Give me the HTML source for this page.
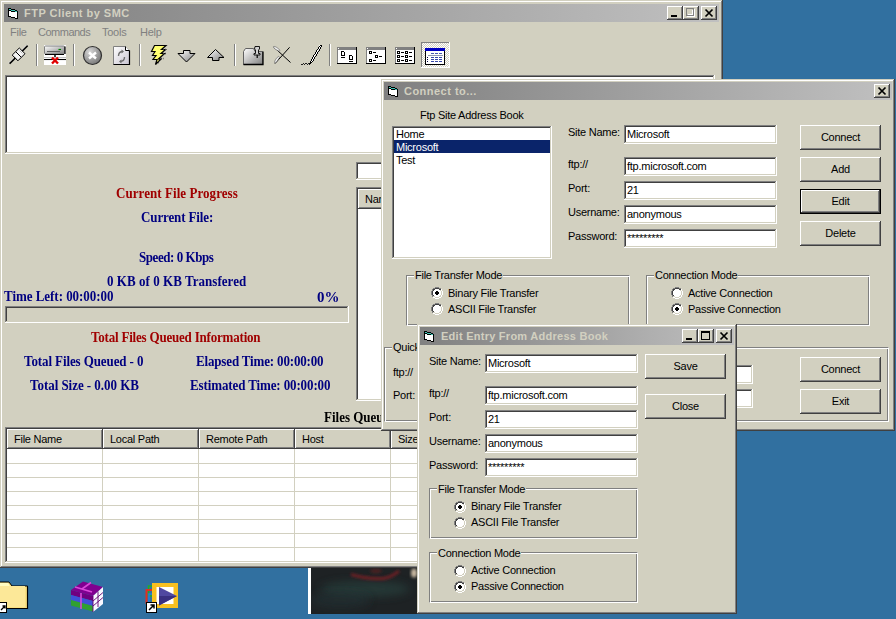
<!DOCTYPE html>
<html><head><meta charset="utf-8"><style>
*{margin:0;padding:0;box-sizing:border-box}
html,body{width:896px;height:619px;overflow:hidden;background:#3170A0;font-family:"Liberation Sans",sans-serif;font-size:11px;color:#000}
.a{position:absolute}
svg{shape-rendering:crispEdges}
.win{position:absolute;background:#D2D0C0;box-shadow:inset -1px -1px #404040,inset 1px 1px #D2D0C0,inset -2px -2px #808080,inset 2px 2px #FFFFFF}
.title{position:absolute;height:18px;background:linear-gradient(to right,#808080,#C0C0C0);color:#D2D0C0;font-weight:bold;font-size:11px;line-height:18px;white-space:nowrap}
.title span{position:absolute;top:0;left:20px}
.tb{position:absolute;width:16px;height:14px;background:#D2D0C0;box-shadow:inset -1px -1px #404040,inset 1px 1px #fff,inset -2px -2px #808080,inset 2px 2px #D2D0C0}
.tb svg{position:absolute;left:0;top:0}
.sunk{position:absolute;background:#fff;box-shadow:inset -1px -1px #fff,inset 1px 1px #808080,inset -2px -2px #D2D0C0,inset 2px 2px #404040}
.btn{position:absolute;width:81px;height:25px;background:#D2D0C0;box-shadow:inset -1px -1px #404040,inset 1px 1px #fff,inset -2px -2px #808080,inset 2px 2px #D2D0C0;text-align:center;line-height:24px;white-space:nowrap;letter-spacing:-0.25px}
.btn.def{box-shadow:inset -1px -1px #000,inset 1px 1px #000,inset -2px -2px #404040,inset 2px 2px #fff,inset -3px -3px #808080}
.t{position:absolute;white-space:nowrap;line-height:13px;letter-spacing:-0.25px}
.grp{position:absolute;border:1px solid #808080;border-right-color:#fff;border-bottom-color:#fff;box-shadow:inset 1px 1px #fff,inset -1px -1px #808080}
.lbl{position:absolute;background:#D2D0C0;padding:0 1px;line-height:13px;white-space:nowrap;letter-spacing:-0.25px}
.rad{position:absolute;width:12px;height:12px}
.srf{font-family:"Liberation Serif",serif;font-weight:bold;font-size:13px;line-height:15px;position:absolute;white-space:nowrap;color:#000080;transform:scaleY(1.07);transform-origin:0 11.5px}
.hd{position:absolute;top:0;height:20px;background:#D2D0C0;box-shadow:inset -1px -1px #404040,inset 1px 1px #fff,inset -2px -2px #808080;line-height:21px;padding-left:7px;white-space:nowrap;letter-spacing:-0.25px}
.tbx span{position:absolute;left:3px;top:3px;line-height:13px;white-space:nowrap;letter-spacing:-0.25px}
</style></head><body>
<svg width="0" height="0" style="position:absolute"><defs><g id="rb"><rect x="4" y="0" width="1" height="1" fill="#808080"/><rect x="5" y="0" width="1" height="1" fill="#808080"/><rect x="6" y="0" width="1" height="1" fill="#808080"/><rect x="7" y="0" width="1" height="1" fill="#808080"/><rect x="2" y="1" width="1" height="1" fill="#808080"/><rect x="3" y="1" width="1" height="1" fill="#808080"/><rect x="4" y="1" width="1" height="1" fill="#404040"/><rect x="5" y="1" width="1" height="1" fill="#404040"/><rect x="6" y="1" width="1" height="1" fill="#404040"/><rect x="7" y="1" width="1" height="1" fill="#404040"/><rect x="8" y="1" width="1" height="1" fill="#808080"/><rect x="9" y="1" width="1" height="1" fill="#808080"/><rect x="1" y="2" width="1" height="1" fill="#808080"/><rect x="2" y="2" width="1" height="1" fill="#404040"/><rect x="3" y="2" width="1" height="1" fill="#404040"/><rect x="4" y="2" width="1" height="1" fill="#ffffff"/><rect x="5" y="2" width="1" height="1" fill="#ffffff"/><rect x="6" y="2" width="1" height="1" fill="#ffffff"/><rect x="7" y="2" width="1" height="1" fill="#ffffff"/><rect x="8" y="2" width="1" height="1" fill="#404040"/><rect x="9" y="2" width="1" height="1" fill="#404040"/><rect x="10" y="2" width="1" height="1" fill="#ffffff"/><rect x="1" y="3" width="1" height="1" fill="#808080"/><rect x="2" y="3" width="1" height="1" fill="#404040"/><rect x="3" y="3" width="1" height="1" fill="#ffffff"/><rect x="4" y="3" width="1" height="1" fill="#ffffff"/><rect x="5" y="3" width="1" height="1" fill="#ffffff"/><rect x="6" y="3" width="1" height="1" fill="#ffffff"/><rect x="7" y="3" width="1" height="1" fill="#ffffff"/><rect x="8" y="3" width="1" height="1" fill="#ffffff"/><rect x="9" y="3" width="1" height="1" fill="#D2D0C0"/><rect x="10" y="3" width="1" height="1" fill="#ffffff"/><rect x="0" y="4" width="1" height="1" fill="#808080"/><rect x="1" y="4" width="1" height="1" fill="#404040"/><rect x="2" y="4" width="1" height="1" fill="#ffffff"/><rect x="3" y="4" width="1" height="1" fill="#ffffff"/><rect x="4" y="4" width="1" height="1" fill="#ffffff"/><rect x="5" y="4" width="1" height="1" fill="#ffffff"/><rect x="6" y="4" width="1" height="1" fill="#ffffff"/><rect x="7" y="4" width="1" height="1" fill="#ffffff"/><rect x="8" y="4" width="1" height="1" fill="#ffffff"/><rect x="9" y="4" width="1" height="1" fill="#ffffff"/><rect x="10" y="4" width="1" height="1" fill="#D2D0C0"/><rect x="11" y="4" width="1" height="1" fill="#ffffff"/><rect x="0" y="5" width="1" height="1" fill="#808080"/><rect x="1" y="5" width="1" height="1" fill="#404040"/><rect x="2" y="5" width="1" height="1" fill="#ffffff"/><rect x="3" y="5" width="1" height="1" fill="#ffffff"/><rect x="4" y="5" width="1" height="1" fill="#ffffff"/><rect x="5" y="5" width="1" height="1" fill="#ffffff"/><rect x="6" y="5" width="1" height="1" fill="#ffffff"/><rect x="7" y="5" width="1" height="1" fill="#ffffff"/><rect x="8" y="5" width="1" height="1" fill="#ffffff"/><rect x="9" y="5" width="1" height="1" fill="#ffffff"/><rect x="10" y="5" width="1" height="1" fill="#D2D0C0"/><rect x="11" y="5" width="1" height="1" fill="#ffffff"/><rect x="0" y="6" width="1" height="1" fill="#808080"/><rect x="1" y="6" width="1" height="1" fill="#404040"/><rect x="2" y="6" width="1" height="1" fill="#ffffff"/><rect x="3" y="6" width="1" height="1" fill="#ffffff"/><rect x="4" y="6" width="1" height="1" fill="#ffffff"/><rect x="5" y="6" width="1" height="1" fill="#ffffff"/><rect x="6" y="6" width="1" height="1" fill="#ffffff"/><rect x="7" y="6" width="1" height="1" fill="#ffffff"/><rect x="8" y="6" width="1" height="1" fill="#ffffff"/><rect x="9" y="6" width="1" height="1" fill="#ffffff"/><rect x="10" y="6" width="1" height="1" fill="#D2D0C0"/><rect x="11" y="6" width="1" height="1" fill="#ffffff"/><rect x="0" y="7" width="1" height="1" fill="#808080"/><rect x="1" y="7" width="1" height="1" fill="#404040"/><rect x="2" y="7" width="1" height="1" fill="#ffffff"/><rect x="3" y="7" width="1" height="1" fill="#ffffff"/><rect x="4" y="7" width="1" height="1" fill="#ffffff"/><rect x="5" y="7" width="1" height="1" fill="#ffffff"/><rect x="6" y="7" width="1" height="1" fill="#ffffff"/><rect x="7" y="7" width="1" height="1" fill="#ffffff"/><rect x="8" y="7" width="1" height="1" fill="#ffffff"/><rect x="9" y="7" width="1" height="1" fill="#ffffff"/><rect x="10" y="7" width="1" height="1" fill="#D2D0C0"/><rect x="11" y="7" width="1" height="1" fill="#ffffff"/><rect x="1" y="8" width="1" height="1" fill="#808080"/><rect x="2" y="8" width="1" height="1" fill="#404040"/><rect x="3" y="8" width="1" height="1" fill="#ffffff"/><rect x="4" y="8" width="1" height="1" fill="#ffffff"/><rect x="5" y="8" width="1" height="1" fill="#ffffff"/><rect x="6" y="8" width="1" height="1" fill="#ffffff"/><rect x="7" y="8" width="1" height="1" fill="#ffffff"/><rect x="8" y="8" width="1" height="1" fill="#ffffff"/><rect x="9" y="8" width="1" height="1" fill="#D2D0C0"/><rect x="10" y="8" width="1" height="1" fill="#ffffff"/><rect x="1" y="9" width="1" height="1" fill="#808080"/><rect x="2" y="9" width="1" height="1" fill="#D2D0C0"/><rect x="3" y="9" width="1" height="1" fill="#D2D0C0"/><rect x="4" y="9" width="1" height="1" fill="#ffffff"/><rect x="5" y="9" width="1" height="1" fill="#ffffff"/><rect x="6" y="9" width="1" height="1" fill="#ffffff"/><rect x="7" y="9" width="1" height="1" fill="#ffffff"/><rect x="8" y="9" width="1" height="1" fill="#D2D0C0"/><rect x="9" y="9" width="1" height="1" fill="#D2D0C0"/><rect x="10" y="9" width="1" height="1" fill="#ffffff"/><rect x="2" y="10" width="1" height="1" fill="#ffffff"/><rect x="3" y="10" width="1" height="1" fill="#ffffff"/><rect x="4" y="10" width="1" height="1" fill="#D2D0C0"/><rect x="5" y="10" width="1" height="1" fill="#D2D0C0"/><rect x="6" y="10" width="1" height="1" fill="#D2D0C0"/><rect x="7" y="10" width="1" height="1" fill="#D2D0C0"/><rect x="8" y="10" width="1" height="1" fill="#ffffff"/><rect x="9" y="10" width="1" height="1" fill="#ffffff"/><rect x="4" y="11" width="1" height="1" fill="#ffffff"/><rect x="5" y="11" width="1" height="1" fill="#ffffff"/><rect x="6" y="11" width="1" height="1" fill="#ffffff"/><rect x="7" y="11" width="1" height="1" fill="#ffffff"/></g><g id="rd"><rect x="5" y="4" width="1" height="1" fill="#000"/><rect x="6" y="4" width="1" height="1" fill="#000"/><rect x="4" y="5" width="1" height="1" fill="#000"/><rect x="5" y="5" width="1" height="1" fill="#000"/><rect x="6" y="5" width="1" height="1" fill="#000"/><rect x="7" y="5" width="1" height="1" fill="#000"/><rect x="4" y="6" width="1" height="1" fill="#000"/><rect x="5" y="6" width="1" height="1" fill="#000"/><rect x="6" y="6" width="1" height="1" fill="#000"/><rect x="7" y="6" width="1" height="1" fill="#000"/><rect x="5" y="7" width="1" height="1" fill="#000"/><rect x="6" y="7" width="1" height="1" fill="#000"/></g></defs></svg>
<div class="a" style="left:308px;top:568px;width:109px;height:46px;background:#fff"></div><svg class="a" style="left:311px;top:568px;shape-rendering:auto" width="106" height="46" viewBox="311 568 106 46"><defs><filter id="bl" x="-20%" y="-50%" width="140%" height="200%"><feGaussianBlur stdDeviation="1.6"/></filter><filter id="bl2" x="-20%" y="-50%" width="140%" height="200%"><feGaussianBlur stdDeviation="4"/></filter></defs><rect x="311" y="568" width="106" height="46" fill="#1e2224"/><ellipse cx="365" cy="589" rx="45" ry="8" fill="#2a4a44" opacity="0.55" filter="url(#bl2)"/><ellipse cx="340" cy="600" rx="30" ry="8" fill="#243034" opacity="0.6" filter="url(#bl2)"/><path d="M351 574.5c10 3 22 4.5 32 4c6-0.5 11-3.5 16-7.5" fill="none" stroke="#7a1e22" stroke-width="2.8" filter="url(#bl)"/><ellipse cx="376" cy="571" rx="6" ry="2.5" fill="#5a2424" opacity="0.7" filter="url(#bl)"/><ellipse cx="414" cy="573" rx="3" ry="4.5" fill="#c8b8a0" filter="url(#bl)"/></svg><svg class="a" style="left:0;top:578px;shape-rendering:auto" width="30" height="36" viewBox="0 578 30 36"><path d="M-2 582h11l3 4h15.5v22.5h-29.5z" fill="#f8e080" stroke="#000" stroke-width="1"/><path d="M-2 586h27v21h-27z" fill="#fce898"/><path d="M-2 583h10l2 3h-12z" fill="#fffcc0"/><path d="M27.5 586.5v22h-29.5" fill="none" stroke="#000" stroke-width="1.2"/><rect x="-1" y="602.5" width="7.5" height="10" fill="#fff" stroke="#000"/><path d="M1 610l3.5-3.5M2.5 606h2.5v2.5" stroke="#000" stroke-width="1.3" fill="none"/></svg><svg class="a" style="left:68px;top:578px;shape-rendering:auto" width="38" height="36" viewBox="68 578 38 36"><path d="M71 590l12-8.5l20 5.5l-10 9z" fill="#800090"/><path d="M71 590l22 6v5l-22-6z" fill="#700080"/><path d="M71 595l22 6v5l-22-6z" fill="#4050d8"/><path d="M71 600l22 6v5.5l-22-6z" fill="#30a030"/><path d="M93 596l10-9v17l-10 8z" fill="#f8f8ff"/><path d="M93 601l10-8.5M93 606l10-8.5M93 596v16M98 591.5v15.5" stroke="#600070" stroke-width="0.9"/><path d="M81 593l0 16M75 587l17 5M82 589l9-6.5" stroke="#d848d8" stroke-width="1.6"/></svg><svg class="a" style="left:144px;top:580px;shape-rendering:auto" width="36" height="34" viewBox="144 580 36 34"><rect x="148.5" y="586" width="8" height="10" fill="none" stroke="#20b020" stroke-width="1.5"/><rect x="146.5" y="590" width="8" height="13" fill="none" stroke="#e03020" stroke-width="2"/><rect x="149" y="594" width="4" height="10" fill="none" stroke="#2080e0" stroke-width="1.5"/><rect x="152" y="583" width="26" height="25" fill="#f8c020"/><rect x="156.5" y="587" width="17" height="17" fill="#fff"/><path d="M159 587l18 9l-18 9.5z" fill="#5048a0"/><path d="M159 596l18 0l-18 9.5z" fill="#3a3080"/><rect x="146.5" y="602.5" width="10" height="10" fill="#fff" stroke="#000"/><path d="M149 610l4.5-4.5M150.5 605h3.5v3.5" stroke="#000" stroke-width="1.5" fill="none"/></svg>
<div class="win" style="left:0;top:0;width:723px;height:568px">
<div class="title" style="left:4px;top:4px;width:715px"><svg class="a" style="left:4px;top:4px" width="10" height="11"><rect x="0" y="0" width="3" height="1" fill="#000"/><rect x="0" y="1" width="1" height="1" fill="#000"/><rect x="1" y="1" width="2" height="1" fill="#40C8B8"/><rect x="3" y="1" width="4" height="1" fill="#000"/><rect x="0" y="2" width="3" height="1" fill="#000"/><rect x="3" y="2" width="4" height="1" fill="#40C8B8"/><rect x="7" y="2" width="2" height="1" fill="#000"/><rect x="0" y="3" width="1" height="1" fill="#000"/><rect x="1" y="3" width="2" height="1" fill="#fff"/><rect x="3" y="3" width="4" height="1" fill="#000"/><rect x="7" y="3" width="2" height="1" fill="#40C8B8"/><rect x="9" y="3" width="1" height="1" fill="#000"/><rect x="0" y="4" width="1" height="1" fill="#000"/><rect x="1" y="4" width="8" height="1" fill="#fff"/><rect x="9" y="4" width="1" height="1" fill="#000"/><rect x="0" y="5" width="1" height="1" fill="#000"/><rect x="1" y="5" width="8" height="1" fill="#fff"/><rect x="9" y="5" width="1" height="1" fill="#000"/><rect x="0" y="6" width="1" height="1" fill="#000"/><rect x="1" y="6" width="8" height="1" fill="#fff"/><rect x="9" y="6" width="1" height="1" fill="#000"/><rect x="0" y="7" width="1" height="1" fill="#000"/><rect x="1" y="7" width="8" height="1" fill="#fff"/><rect x="9" y="7" width="1" height="1" fill="#000"/><rect x="0" y="8" width="3" height="1" fill="#000"/><rect x="3" y="8" width="6" height="1" fill="#fff"/><rect x="9" y="8" width="1" height="1" fill="#000"/><rect x="3" y="9" width="4" height="1" fill="#000"/><rect x="7" y="9" width="2" height="1" fill="#fff"/><rect x="9" y="9" width="1" height="1" fill="#000"/><rect x="7" y="10" width="3" height="1" fill="#000"/></svg><span style="letter-spacing:0.48px">FTP Client by SMC</span></div>
<div class="tb" style="left:667px;top:6px"><svg width="16" height="14"><rect x="4" y="9" width="6" height="2" fill="#000"/></svg></div>
<div class="tb" style="left:683px;top:6px"><svg width="16" height="14"><rect x="4" y="3" width="8" height="8" fill="#fff"/><rect x="3" y="2" width="8" height="8" fill="#808080"/><rect x="4" y="3" width="6" height="6" fill="#D2D0C0"/><rect x="5" y="4" width="5" height="5" fill="#fff"/><rect x="5" y="4" width="4" height="4" fill="#D2D0C0"/></svg></div>
<div class="tb" style="left:701px;top:6px"><svg width="16" height="14" style="shape-rendering:auto"><path d="M4.5 3.5l7 7M11.5 3.5l-7 7" stroke="#000" stroke-width="1.7"/></svg></div>
<div class="t" style="left:10px;top:26px;color:#808080">File</div>
<div class="t" style="left:38px;top:26px;color:#808080;letter-spacing:-0.5px">Commands</div>
<div class="t" style="left:102px;top:26px;color:#808080">Tools</div>
<div class="t" style="left:140px;top:26px;color:#808080">Help</div>
<div class="a" style="left:36px;top:44px;width:2px;height:22px;border-left:1px solid #808080;border-right:1px solid #fff"></div>
<div class="a" style="left:73px;top:44px;width:2px;height:22px;border-left:1px solid #808080;border-right:1px solid #fff"></div>
<div class="a" style="left:139px;top:44px;width:2px;height:22px;border-left:1px solid #808080;border-right:1px solid #fff"></div>
<div class="a" style="left:234px;top:44px;width:2px;height:22px;border-left:1px solid #808080;border-right:1px solid #fff"></div>
<div class="a" style="left:329px;top:44px;width:2px;height:22px;border-left:1px solid #808080;border-right:1px solid #fff"></div>
<svg class="a" style="left:0;top:40px;shape-rendering:auto" width="460" height="32" viewBox="0 40 460 32"><defs><linearGradient id="gg" x1="0" y1="0" x2="1" y2="1"><stop offset="0" stop-color="#fff"/><stop offset="1" stop-color="#808080"/></linearGradient><radialGradient id="sg" cx="0.35" cy="0.3" r="0.8"><stop offset="0" stop-color="#d8d8d8"/><stop offset="1" stop-color="#707070"/></radialGradient><linearGradient id="pg" x1="0" y1="0" x2="1" y2="1"><stop offset="0" stop-color="#fff"/><stop offset="1" stop-color="#c8c4d0"/></linearGradient><pattern id="dith" width="2" height="2" patternUnits="userSpaceOnUse"><rect width="2" height="2" fill="#D2D0C0"/><rect width="1" height="1" fill="#fff"/><rect x="1" y="1" width="1" height="1" fill="#fff"/></pattern></defs><path d="M9.5 63.5L27.5 45.5" stroke="#000" stroke-width="2"/><path d="M8.8 62.8L26.8 44.8" stroke="#fff" stroke-width="0.9"/><path d="M19.3 48.0L25.0 53.7L17.9 60.8L12.2 55.1Z" fill="#f4f4f4" stroke="#000" stroke-width="1" stroke-linejoin="round"/><path d="M16 52L21 57" stroke="#000" stroke-width="1"/><path d="M14.5 56.5L17.5 59.5M19.5 50.5L22.5 53.5" stroke="#b0b0b0" stroke-width="0.8"/><rect x="44" y="45" width="22" height="20" fill="#fff"/><rect x="44.5" y="46" width="20" height="8" rx="1" fill="url(#gg)" stroke="#808080"/><path d="M65 46.5v7.5M45 54.5h19" stroke="#000" stroke-width="1.2"/><path d="M47 51.5h13" stroke="#606060"/><path d="M58.5 49.5h2.5" stroke="#008000" stroke-width="1.2"/><path d="M55 54.5v3" stroke="#000" stroke-width="1.5"/><path d="M44 57.5h22" stroke="#c0c0c0"/><path d="M44 59.5h22" stroke="#000" stroke-width="1.1"/><path d="M52 57.5l6 6M58 57.5l-6 6" stroke="#e00000" stroke-width="2.4"/><circle cx="92.5" cy="55.5" r="9" fill="url(#sg)" stroke="#303030" stroke-width="1.2"/><path d="M89 52.5l7 6M96 52.5l-7 6" stroke="#fff" stroke-width="2.4"/><path d="M113.5 46.5h12l4 4v14h-16z" fill="url(#pg)" stroke="#808080"/><path d="M129.5 50.5v14h-16" fill="none" stroke="#000" stroke-width="1.2"/><path d="M125.5 46.5v4h4" fill="#fff" stroke="#000"/><path d="M118.5 56c0-3 2-4.5 4.5-4.5" fill="none" stroke="#707070" stroke-width="1.4"/><path d="M121.5 49.5l2.5 2l-2.5 2z" fill="#707070"/><path d="M124.5 57c0 3-2 4.5-4.5 4.5" fill="none" stroke="#707070" stroke-width="1.4"/><path d="M121.5 59.5l-2.5 2l2.5 2z" fill="#707070"/><path d="M154.5 45.5h11.5l-4.5 4h4l-4.5 4h3.5l-6 5.5h2.5l-5.5 5.5 1.5-5h-4l3-4h-3.5l2.5-4h-3.5z" fill="#ffff70" stroke="#000" stroke-width="1.2"/><path d="M163 49.5h3M163 53.5h3M161 58.5h2.5M158 62.5h2" stroke="#404040" stroke-width="1.5" stroke-dasharray="1 1"/><path d="M183.5 50.5h6.5v3h5l-8.5 8.5-8.5-8.5h5.5z" fill="url(#gg)" stroke="#000" stroke-width="1"/><path d="M215.5 49.5l8.5 8h-5v3h-6.5v-3h-5z" fill="url(#gg)" stroke="#000" stroke-width="1"/><path d="M243.5 64.5v-13l2-3h8l1.5 3h7.5v13z" fill="url(#gg)" stroke="#606060"/><path d="M243.5 64.5h19.5v-13" fill="none" stroke="#000" stroke-width="1.3"/><path d="M255 46.5h4.5v2.5l-1 1v3.5h1.5v1.5h-6v-1.5h1.5v-3.5l-1-1z" fill="#d0d0d0" stroke="#000" stroke-width="0.9"/><path d="M257.2 55v3" stroke="#000" stroke-width="1.2"/><path d="M273.8 47l16.7 15.5M289.6 47.3L275 63.5" stroke="#000" stroke-width="1"/><path d="M273.5 46.8c1.5-1 4 1 6.5 3.5l-1 1c-3-1.5-5.5-3-5.5-4.5z" fill="#f0f0f0" stroke="#505050" stroke-width="0.6"/><path d="M275 63.3c-1-1 0-4 3.5-7l1 1c-1.5 3-3 5-4.5 6z" fill="#f0f0f0" stroke="#505050" stroke-width="0.6"/><g style="shape-rendering:crispEdges"><rect x="320" y="45" width="1" height="1" fill="#000"/><rect x="321" y="45" width="1" height="1" fill="#000"/><rect x="319" y="46" width="1" height="1" fill="#000"/><rect x="321" y="46" width="1" height="1" fill="#000"/><rect x="318" y="47" width="1" height="1" fill="#000"/><rect x="320" y="47" width="1" height="1" fill="#000"/><rect x="318" y="48" width="1" height="1" fill="#000"/><rect x="320" y="48" width="1" height="1" fill="#000"/><rect x="317" y="49" width="1" height="1" fill="#000"/><rect x="319" y="49" width="1" height="1" fill="#000"/><rect x="316" y="50" width="1" height="1" fill="#000"/><rect x="319" y="50" width="1" height="1" fill="#000"/><rect x="316" y="51" width="1" height="1" fill="#000"/><rect x="318" y="51" width="1" height="1" fill="#000"/><rect x="315" y="52" width="1" height="1" fill="#000"/><rect x="317" y="52" width="1" height="1" fill="#000"/><rect x="315" y="53" width="1" height="1" fill="#000"/><rect x="317" y="53" width="1" height="1" fill="#000"/><rect x="314" y="54" width="1" height="1" fill="#000"/><rect x="316" y="54" width="1" height="1" fill="#000"/><rect x="313" y="55" width="1" height="1" fill="#000"/><rect x="316" y="55" width="1" height="1" fill="#000"/><rect x="313" y="56" width="1" height="1" fill="#000"/><rect x="315" y="56" width="1" height="1" fill="#000"/><rect x="312" y="57" width="1" height="1" fill="#000"/><rect x="314" y="57" width="1" height="1" fill="#000"/><rect x="312" y="58" width="1" height="1" fill="#000"/><rect x="314" y="58" width="1" height="1" fill="#000"/><rect x="311" y="59" width="1" height="1" fill="#000"/><rect x="313" y="59" width="1" height="1" fill="#000"/><rect x="311" y="60" width="1" height="1" fill="#000"/><rect x="313" y="60" width="1" height="1" fill="#000"/><rect x="310" y="61" width="1" height="1" fill="#000"/><rect x="312" y="61" width="1" height="1" fill="#000"/><rect x="310" y="62" width="1" height="1" fill="#000"/><rect x="311" y="62" width="1" height="1" fill="#000"/><rect x="309" y="63" width="1" height="1" fill="#000"/><rect x="310" y="63" width="1" height="1" fill="#000"/><rect x="319" y="45" width="1" height="1" fill="#fff"/><rect x="320" y="46" width="1" height="1" fill="#fff"/><rect x="319" y="47" width="1" height="1" fill="#fff"/><rect x="319" y="48" width="1" height="1" fill="#fff"/><rect x="318" y="49" width="1" height="1" fill="#fff"/><rect x="317" y="50" width="1" height="1" fill="#fff"/><rect x="317" y="51" width="1" height="1" fill="#fff"/><rect x="316" y="52" width="1" height="1" fill="#fff"/><rect x="316" y="53" width="1" height="1" fill="#fff"/><rect x="315" y="54" width="1" height="1" fill="#fff"/><rect x="314" y="55" width="1" height="1" fill="#fff"/><rect x="314" y="56" width="1" height="1" fill="#fff"/><rect x="313" y="57" width="1" height="1" fill="#fff"/><rect x="313" y="58" width="1" height="1" fill="#fff"/><rect x="312" y="59" width="1" height="1" fill="#fff"/><rect x="312" y="60" width="1" height="1" fill="#fff"/><rect x="311" y="61" width="1" height="1" fill="#fff"/><rect x="301" y="64" width="1" height="1" fill="#202020"/><rect x="302" y="64" width="1" height="1" fill="#202020"/><rect x="303" y="63" width="1" height="1" fill="#202020"/><rect x="304" y="64" width="1" height="1" fill="#202020"/><rect x="305" y="63" width="1" height="1" fill="#202020"/><rect x="306" y="63" width="1" height="1" fill="#202020"/><rect x="307" y="64" width="1" height="1" fill="#202020"/><rect x="308" y="63" width="1" height="1" fill="#202020"/><rect x="309" y="64" width="1" height="1" fill="#202020"/></g><g style="shape-rendering:crispEdges"><rect x="337" y="47" width="20" height="17" fill="#000"/><rect x="337" y="47" width="19" height="16" fill="#808080"/><rect x="338" y="50" width="18" height="13" fill="#fff"/><rect x="338" y="48" width="1" height="1" fill="#fff"/><rect x="341" y="51" width="4" height="5" fill="#000"/><rect x="342" y="52" width="2" height="3" fill="#fff"/><rect x="344" y="51" width="1" height="1" fill="#fff"/><rect x="341" y="57" width="4" height="1" fill="#000"/><rect x="349" y="55" width="4" height="5" fill="#000"/><rect x="350" y="56" width="2" height="3" fill="#fff"/><rect x="352" y="55" width="1" height="1" fill="#fff"/><rect x="349" y="61" width="4" height="1" fill="#000"/><rect x="366" y="47" width="20" height="17" fill="#000"/><rect x="366" y="47" width="19" height="16" fill="#808080"/><rect x="367" y="50" width="18" height="13" fill="#fff"/><rect x="367" y="48" width="1" height="1" fill="#fff"/><rect x="369" y="51" width="3" height="3" fill="#000"/><rect x="370" y="52" width="1" height="1" fill="#fff"/><rect x="373" y="52" width="3" height="1" fill="#000"/><rect x="375" y="55" width="3" height="3" fill="#000"/><rect x="376" y="56" width="1" height="1" fill="#fff"/><rect x="379" y="56" width="3" height="1" fill="#000"/><rect x="369" y="59" width="3" height="3" fill="#000"/><rect x="370" y="60" width="1" height="1" fill="#fff"/><rect x="373" y="60" width="3" height="1" fill="#000"/><rect x="395" y="47" width="20" height="17" fill="#000"/><rect x="395" y="47" width="19" height="16" fill="#808080"/><rect x="396" y="50" width="18" height="13" fill="#fff"/><rect x="396" y="48" width="1" height="1" fill="#fff"/><rect x="397" y="51" width="3" height="3" fill="#000"/><rect x="398" y="52" width="1" height="1" fill="#fff"/><rect x="401" y="52" width="3" height="1" fill="#000"/><rect x="405" y="51" width="3" height="3" fill="#000"/><rect x="406" y="52" width="1" height="1" fill="#fff"/><rect x="409" y="52" width="3" height="1" fill="#000"/><rect x="397" y="55" width="3" height="3" fill="#000"/><rect x="398" y="56" width="1" height="1" fill="#fff"/><rect x="401" y="56" width="3" height="1" fill="#000"/><rect x="405" y="55" width="3" height="3" fill="#000"/><rect x="406" y="56" width="1" height="1" fill="#fff"/><rect x="409" y="56" width="3" height="1" fill="#000"/><rect x="397" y="59" width="3" height="3" fill="#000"/><rect x="398" y="60" width="1" height="1" fill="#fff"/><rect x="401" y="60" width="3" height="1" fill="#000"/><rect x="405" y="59" width="3" height="3" fill="#000"/><rect x="406" y="60" width="1" height="1" fill="#fff"/><rect x="409" y="60" width="3" height="1" fill="#000"/><rect x="421" y="42" width="29" height="26" fill="url(#dith)"/><rect x="421" y="42" width="29" height="1" fill="#808080"/><rect x="421" y="42" width="1" height="26" fill="#808080"/><rect x="421" y="67" width="29" height="1" fill="#fff"/><rect x="449" y="42" width="1" height="26" fill="#fff"/><rect x="425" y="48" width="20" height="17" fill="#000"/><rect x="426" y="48" width="18" height="16" fill="#fff"/><rect x="425" y="48" width="20" height="3" fill="#0000c0"/><rect x="431" y="53" width="3" height="1" fill="#4858b0"/><rect x="435" y="53" width="3" height="1" fill="#4858b0"/><rect x="439" y="53" width="3" height="1" fill="#4858b0"/><rect x="428" y="55" width="15" height="1" fill="#9098b0"/><rect x="427" y="57" width="1" height="1" fill="#000040"/><rect x="431" y="57" width="3" height="1" fill="#3848a8"/><rect x="435" y="57" width="3" height="1" fill="#3848a8"/><rect x="439" y="57" width="3" height="1" fill="#3848a8"/><rect x="427" y="59" width="1" height="1" fill="#000040"/><rect x="431" y="59" width="3" height="1" fill="#3848a8"/><rect x="435" y="59" width="3" height="1" fill="#3848a8"/><rect x="439" y="59" width="3" height="1" fill="#3848a8"/><rect x="427" y="61" width="1" height="1" fill="#000040"/><rect x="431" y="61" width="3" height="1" fill="#3848a8"/><rect x="435" y="61" width="3" height="1" fill="#3848a8"/><rect x="439" y="61" width="3" height="1" fill="#3848a8"/></g></svg>
<div class="sunk" style="left:5px;top:75px;width:710px;height:79px"></div>
<div class="sunk" style="left:356px;top:162px;width:40px;height:18px"></div>
<div class="sunk" style="left:356px;top:187px;width:40px;height:214px;overflow:hidden"><div class="hd" style="left:2px;top:2px;width:80px">Name</div></div>
<div class="srf" style="left:116px;top:186px;color:#A00000;letter-spacing:0.06px">Current File Progress</div>
<div class="srf" style="left:141px;top:210px;letter-spacing:-0.12px">Current File:</div>
<div class="srf" style="left:139px;top:250px;letter-spacing:-0.44px">Speed: 0 Kbps</div>
<div class="srf" style="left:107px;top:274px;letter-spacing:0.04px">0 KB of 0 KB Transfered</div>
<div class="srf" style="left:4px;top:289px;letter-spacing:-0.04px">Time Left: 00:00:00</div>
<div class="srf" style="left:317px;top:290px;letter-spacing:0px;transform:scale(1.15,1.07);transform-origin:0 11.5px">0%</div>
<div class="srf" style="left:91px;top:330px;color:#A00000;letter-spacing:-0.2px">Total Files Queued Information</div>
<div class="srf" style="left:24px;top:354px;letter-spacing:-0.1px">Total Files Queued - 0</div>
<div class="srf" style="left:196px;top:354px;letter-spacing:-0.16px">Elapsed Time: 00:00:00</div>
<div class="srf" style="left:30px;top:378px;letter-spacing:-0.04px">Total Size - 0.00 KB</div>
<div class="srf" style="left:190px;top:378px;letter-spacing:-0.12px">Estimated Time: 00:00:00</div>
<div class="srf" style="left:324px;top:410px;color:#000;letter-spacing:0px">Files Queued</div>
<div class="sunk" style="left:5px;top:306px;width:344px;height:17px;background:#D2D0C0"></div>
<div class="sunk" style="left:5px;top:427px;width:712px;height:136px"><div class="a" style="left:2px;top:2px;width:708px;height:132px;overflow:hidden">
<div class="a" style="left:0;top:34px;width:708px;height:1px;background:#D2D0C0"></div>
<div class="a" style="left:0;top:48px;width:708px;height:1px;background:#D2D0C0"></div>
<div class="a" style="left:0;top:62px;width:708px;height:1px;background:#D2D0C0"></div>
<div class="a" style="left:0;top:76px;width:708px;height:1px;background:#D2D0C0"></div>
<div class="a" style="left:0;top:90px;width:708px;height:1px;background:#D2D0C0"></div>
<div class="a" style="left:0;top:104px;width:708px;height:1px;background:#D2D0C0"></div>
<div class="a" style="left:0;top:118px;width:708px;height:1px;background:#D2D0C0"></div>
<div class="a" style="left:95px;top:0;width:1px;height:132px;background:#D2D0C0"></div>
<div class="a" style="left:191px;top:0;width:1px;height:132px;background:#D2D0C0"></div>
<div class="a" style="left:287px;top:0;width:1px;height:132px;background:#D2D0C0"></div>
<div class="a" style="left:383px;top:0;width:1px;height:132px;background:#D2D0C0"></div>
<div class="a" style="left:479px;top:0;width:1px;height:132px;background:#D2D0C0"></div>
<div class="hd" style="left:0px;width:96px">File Name</div>
<div class="hd" style="left:96px;width:96px">Local Path</div>
<div class="hd" style="left:192px;width:96px">Remote Path</div>
<div class="hd" style="left:288px;width:96px">Host</div>
<div class="hd" style="left:384px;width:96px">Size</div>
</div></div>
</div>
<div class="win" style="left:381px;top:79px;width:514px;height:352px">
<div class="title" style="left:3px;top:3px;width:508px"><svg class="a" style="left:4px;top:4px" width="10" height="11"><rect x="0" y="0" width="3" height="1" fill="#000"/><rect x="0" y="1" width="1" height="1" fill="#000"/><rect x="1" y="1" width="2" height="1" fill="#40C8B8"/><rect x="3" y="1" width="4" height="1" fill="#000"/><rect x="0" y="2" width="3" height="1" fill="#000"/><rect x="3" y="2" width="4" height="1" fill="#40C8B8"/><rect x="7" y="2" width="2" height="1" fill="#000"/><rect x="0" y="3" width="1" height="1" fill="#000"/><rect x="1" y="3" width="2" height="1" fill="#fff"/><rect x="3" y="3" width="4" height="1" fill="#000"/><rect x="7" y="3" width="2" height="1" fill="#40C8B8"/><rect x="9" y="3" width="1" height="1" fill="#000"/><rect x="0" y="4" width="1" height="1" fill="#000"/><rect x="1" y="4" width="8" height="1" fill="#fff"/><rect x="9" y="4" width="1" height="1" fill="#000"/><rect x="0" y="5" width="1" height="1" fill="#000"/><rect x="1" y="5" width="8" height="1" fill="#fff"/><rect x="9" y="5" width="1" height="1" fill="#000"/><rect x="0" y="6" width="1" height="1" fill="#000"/><rect x="1" y="6" width="8" height="1" fill="#fff"/><rect x="9" y="6" width="1" height="1" fill="#000"/><rect x="0" y="7" width="1" height="1" fill="#000"/><rect x="1" y="7" width="8" height="1" fill="#fff"/><rect x="9" y="7" width="1" height="1" fill="#000"/><rect x="0" y="8" width="3" height="1" fill="#000"/><rect x="3" y="8" width="6" height="1" fill="#fff"/><rect x="9" y="8" width="1" height="1" fill="#000"/><rect x="3" y="9" width="4" height="1" fill="#000"/><rect x="7" y="9" width="2" height="1" fill="#fff"/><rect x="9" y="9" width="1" height="1" fill="#000"/><rect x="7" y="10" width="3" height="1" fill="#000"/></svg><span style="letter-spacing:0.48px">Connect to...</span></div>
<div class="tb" style="left:493px;top:5px"><svg width="16" height="14" style="shape-rendering:auto"><path d="M4.5 3.5l7 7M11.5 3.5l-7 7" stroke="#000" stroke-width="1.7"/></svg></div>
<div class="t" style="left:39px;top:30px;">Ftp Site Address Book</div>
<div class="sunk" style="left:11px;top:47px;width:160px;height:133px"><div class="t" style="left:4px;top:2px">Home</div><div class="a" style="left:2px;top:14px;width:156px;height:13px;background:#0A246A"></div><div class="t" style="left:4px;top:15px;color:#fff">Microsoft</div><div class="t" style="left:4px;top:28px">Test</div></div>
<div class="t" style="left:187px;top:47px;">Site Name:</div>
<div class="sunk tbx" style="left:243px;top:46px;width:153px;height:19px"><span>Microsoft</span></div>
<div class="t" style="left:187px;top:79px;">ftp://</div>
<div class="sunk tbx" style="left:243px;top:78px;width:153px;height:19px"><span>ftp.microsoft.com</span></div>
<div class="t" style="left:187px;top:103px;">Port:</div>
<div class="sunk tbx" style="left:243px;top:102px;width:153px;height:19px"><span>21</span></div>
<div class="t" style="left:187px;top:127px;">Username:</div>
<div class="sunk tbx" style="left:243px;top:126px;width:153px;height:19px"><span>anonymous</span></div>
<div class="t" style="left:187px;top:151px;">Password:</div>
<div class="sunk tbx" style="left:243px;top:150px;width:153px;height:19px"><span>*********</span></div>
<div class="btn" style="left:419px;top:46px">Connect</div>
<div class="btn" style="left:419px;top:78px">Add</div>
<div class="btn def" style="left:419px;top:110px">Edit</div>
<div class="btn" style="left:419px;top:142px">Delete</div>
<div class="grp" style="left:25px;top:196px;width:224px;height:51px"></div>
<div class="lbl" style="left:33px;top:190px">File Transfer Mode</div>
<svg class="rad" style="left:50px;top:208px" width="12" height="12"><use href="#rb"/><use href="#rd"/></svg>
<div class="t" style="left:67px;top:208px;">Binary File Transfer</div>
<svg class="rad" style="left:50px;top:224px" width="12" height="12"><use href="#rb"/></svg>
<div class="t" style="left:67px;top:224px;">ASCII File Transfer</div>
<div class="grp" style="left:265px;top:196px;width:224px;height:51px"></div>
<div class="lbl" style="left:273px;top:190px">Connection Mode</div>
<svg class="rad" style="left:290px;top:208px" width="12" height="12"><use href="#rb"/></svg>
<div class="t" style="left:307px;top:208px;">Active Connection</div>
<svg class="rad" style="left:290px;top:224px" width="12" height="12"><use href="#rb"/><use href="#rd"/></svg>
<div class="t" style="left:307px;top:224px;">Passive Connection</div>
<div class="grp" style="left:3px;top:268px;width:505px;height:75px"></div>
<div class="lbl" style="left:11px;top:262px">Quick Connect</div>
<div class="t" style="left:12px;top:287px;">ftp://</div>
<div class="t" style="left:12px;top:310px;">Port:</div>
<div class="sunk tbx" style="left:219px;top:286px;width:153px;height:19px"><span></span></div>
<div class="sunk tbx" style="left:219px;top:310px;width:153px;height:19px"><span></span></div>
<div class="btn" style="left:419px;top:278px">Connect</div>
<div class="btn" style="left:419px;top:310px">Exit</div>
</div>
<div class="win" style="left:417px;top:324px;width:320px;height:290px">
<div class="title" style="left:3px;top:3px;width:314px"><svg class="a" style="left:4px;top:4px" width="10" height="11"><rect x="0" y="0" width="3" height="1" fill="#000"/><rect x="0" y="1" width="1" height="1" fill="#000"/><rect x="1" y="1" width="2" height="1" fill="#40C8B8"/><rect x="3" y="1" width="4" height="1" fill="#000"/><rect x="0" y="2" width="3" height="1" fill="#000"/><rect x="3" y="2" width="4" height="1" fill="#40C8B8"/><rect x="7" y="2" width="2" height="1" fill="#000"/><rect x="0" y="3" width="1" height="1" fill="#000"/><rect x="1" y="3" width="2" height="1" fill="#fff"/><rect x="3" y="3" width="4" height="1" fill="#000"/><rect x="7" y="3" width="2" height="1" fill="#40C8B8"/><rect x="9" y="3" width="1" height="1" fill="#000"/><rect x="0" y="4" width="1" height="1" fill="#000"/><rect x="1" y="4" width="8" height="1" fill="#fff"/><rect x="9" y="4" width="1" height="1" fill="#000"/><rect x="0" y="5" width="1" height="1" fill="#000"/><rect x="1" y="5" width="8" height="1" fill="#fff"/><rect x="9" y="5" width="1" height="1" fill="#000"/><rect x="0" y="6" width="1" height="1" fill="#000"/><rect x="1" y="6" width="8" height="1" fill="#fff"/><rect x="9" y="6" width="1" height="1" fill="#000"/><rect x="0" y="7" width="1" height="1" fill="#000"/><rect x="1" y="7" width="8" height="1" fill="#fff"/><rect x="9" y="7" width="1" height="1" fill="#000"/><rect x="0" y="8" width="3" height="1" fill="#000"/><rect x="3" y="8" width="6" height="1" fill="#fff"/><rect x="9" y="8" width="1" height="1" fill="#000"/><rect x="3" y="9" width="4" height="1" fill="#000"/><rect x="7" y="9" width="2" height="1" fill="#fff"/><rect x="9" y="9" width="1" height="1" fill="#000"/><rect x="7" y="10" width="3" height="1" fill="#000"/></svg><span style="letter-spacing:0.26px;left:21px">Edit Entry From Address Book</span></div>
<div class="tb" style="left:265px;top:5px"><svg width="16" height="14"><rect x="4" y="9" width="6" height="2" fill="#000"/></svg></div>
<div class="tb" style="left:281px;top:5px"><svg width="16" height="14"><rect x="3" y="2" width="9" height="9" fill="#000"/><rect x="4" y="4" width="7" height="6" fill="#D2D0C0"/></svg></div>
<div class="tb" style="left:299px;top:5px"><svg width="16" height="14" style="shape-rendering:auto"><path d="M4.5 3.5l7 7M11.5 3.5l-7 7" stroke="#000" stroke-width="1.7"/></svg></div>
<div class="t" style="left:12px;top:31px;">Site Name:</div>
<div class="sunk tbx" style="left:68px;top:30px;width:153px;height:19px"><span>Microsoft</span></div>
<div class="t" style="left:12px;top:63px;">ftp://</div>
<div class="sunk tbx" style="left:68px;top:62px;width:153px;height:19px"><span>ftp.microsoft.com</span></div>
<div class="t" style="left:12px;top:87px;">Port:</div>
<div class="sunk tbx" style="left:68px;top:86px;width:153px;height:19px"><span>21</span></div>
<div class="t" style="left:12px;top:111px;">Username:</div>
<div class="sunk tbx" style="left:68px;top:110px;width:153px;height:19px"><span>anonymous</span></div>
<div class="t" style="left:12px;top:135px;">Password:</div>
<div class="sunk tbx" style="left:68px;top:134px;width:153px;height:19px"><span>*********</span></div>
<div class="btn" style="left:228px;top:30px">Save</div>
<div class="btn" style="left:228px;top:70px">Close</div>
<div class="grp" style="left:12px;top:164px;width:209px;height:51px"></div>
<div class="lbl" style="left:20px;top:159px">File Transfer Mode</div>
<svg class="rad" style="left:37px;top:177px" width="12" height="12"><use href="#rb"/><use href="#rd"/></svg>
<div class="t" style="left:54px;top:176px;">Binary File Transfer</div>
<svg class="rad" style="left:37px;top:193px" width="12" height="12"><use href="#rb"/></svg>
<div class="t" style="left:54px;top:192px;">ASCII File Transfer</div>
<div class="grp" style="left:12px;top:228px;width:209px;height:51px"></div>
<div class="lbl" style="left:20px;top:223px">Connection Mode</div>
<svg class="rad" style="left:37px;top:241px" width="12" height="12"><use href="#rb"/></svg>
<div class="t" style="left:54px;top:240px;">Active Connection</div>
<svg class="rad" style="left:37px;top:257px" width="12" height="12"><use href="#rb"/><use href="#rd"/></svg>
<div class="t" style="left:54px;top:256px;">Passive Connection</div>
</div>
</body></html>
